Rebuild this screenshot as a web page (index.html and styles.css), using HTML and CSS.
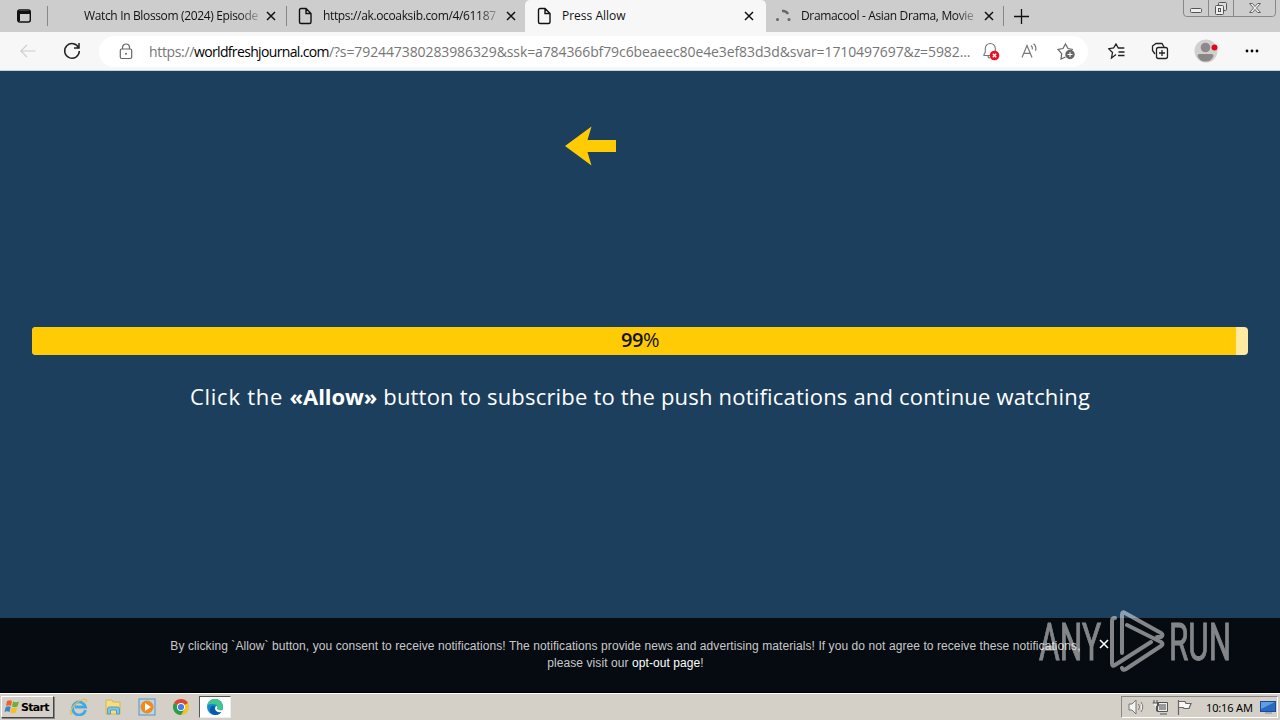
FILE: index.html
```html
<!DOCTYPE html>
<html lang="en">
<head>
  <meta charset="UTF-8" />
  <meta name="viewport" content="width=device-width, initial-scale=1.0"/>
  <title>Press Allow</title>
  <link rel="stylesheet" href="styles.css">
</head>
<body>

  <div class="tabstrip">
    <div class="tab-actions">
      <svg width="16" height="16" viewBox="0 0 16 16"><rect x="1.7" y="2" width="12.6" height="12" rx="2" fill="none" stroke="#111" stroke-width="1.4"/><path d="M2 3h12v3H2zM2 6h2v7H2z" fill="#111"/></svg>
    </div>
    <div class="tab tab-first">
      <span class="tab-icon"></span>
      <span class="tab-title title-watch">Watch In Blossom (2024) Episode</span>
      <svg class="close" width="10" height="10" viewBox="0 0 10 10"><path d="M1 1l8 8M9 1l-8 8"/></svg>
    </div>
    <div class="tab">
      <svg class="tab-icon" width="16" height="18" viewBox="0 0 16 18"><path class="page-icon" d="M2.500 3q0-1.500 1.500-1.500h5l5 5V15q0 1.500-1.500 1.500H4q-1.500 0-1.500-1.500zM9 1.500v5h5"/></svg>
      <span class="tab-title title-link">https://ak.ocoaksib.com/4/61187</span>
      <svg class="close" width="10" height="10" viewBox="0 0 10 10"><path d="M1 1l8 8M9 1l-8 8"/></svg>
    </div>
    <div class="tab active">
      <svg class="tab-icon" width="16" height="18" viewBox="0 0 16 18"><path class="page-icon" d="M2.500 3q0-1.500 1.500-1.500h5l5 5V15q0 1.500-1.500 1.500H4q-1.500 0-1.500-1.500zM9 1.500v5h5"/></svg>
      <span class="tab-title">Press Allow</span>
      <svg class="close" width="10" height="10" viewBox="0 0 10 10"><path d="M1 1l8 8M9 1l-8 8"/></svg>
    </div>
    <div class="tab tab-last">
      <svg class="tab-icon" width="16" height="18" viewBox="0 0 16 18"><path d="M7 4q4-.5 6 3" fill="none" stroke="#666" stroke-width="2.500"/><circle cx="2.500" cy="12.500" r="1.500" fill="#666"/><circle cx="14" cy="12.500" r="1.500" fill="#666"/></svg>
      <span class="tab-title title-drama">Dramacool - Asian Drama, Movie</span>
      <svg class="close" width="10" height="10" viewBox="0 0 10 10"><path d="M1 1l8 8M9 1l-8 8"/></svg>
    </div>
    <svg class="new-tab" width="15" height="15" viewBox="0 0 15 15"><path d="M7.500 0v15M0 7.500h15" stroke="#111" stroke-width="1.300"/></svg>
    <svg class="window-controls" width="93" height="17" viewBox="0 0 93 17">
      <path d="M.5 0v13q0 3.500 3 3.500h86q3 0 3-3.500V0M25.500 0v16M50.500 0v16" fill="none" stroke="#888"/>
      <rect x="7.500" y="8.500" width="11" height="4" rx="1" fill="#eee" stroke="#555"/>
      <rect x="35.500" y="2.500" width="8" height="8" rx="1" fill="#ddd" stroke="#555"/><rect x="32.500" y="5.500" width="8" height="9" rx="1" fill="#eee" stroke="#555"/><rect x="35.500" y="8.500" width="2" height="3" fill="none" stroke="#555"/>
      <path d="M66.500 3.500h3l2.500 3 2.500-3h3l-4 4.500 4 4.500h-3l-2.500-3-2.500 3h-3l4-4.500z" fill="#eee" stroke="#666"/>
    </svg>
  </div>

  <div class="toolbar">
    <svg class="back" width="16" height="14" viewBox="0 0 16 14"><path d="M15.500 7H1M7 .8L.8 7 7 13.200" fill="none" stroke="#ccc" stroke-width="1.200"/></svg>
    <svg class="reload" width="18" height="18" viewBox="0 0 18 18"><path d="M15.700 6A7.300 7.300 0 1 0 16.300 9M16 1v5h-5" fill="none" stroke="#222" stroke-width="1.500"/></svg>
    <div class="address">
      <svg class="lock" width="14" height="17" viewBox="0 0 14 17"><path d="M3.500 6V4.500a3.500 3.500 0 0 1 7 0V6" fill="none" stroke="#666" stroke-width="1.200"/><rect x="1.300" y="6" width="11.400" height="9.500" rx="1.500" fill="none" stroke="#666" stroke-width="1.200"/><circle cx="7" cy="10.700" r="1" fill="#666"/></svg>
      <div class="url"><span class="scheme">https://</span><span class="host">worldfreshjournal.com</span><span class="path">/?s=792447380283986329&amp;ssk=a784366bf79c6beaeec80e4e3ef83d3d&amp;svar=1710497697&amp;z=5982...</span></div>
      <svg class="bell" width="18" height="19" viewBox="0 0 18 19"><path d="M1.500 13.500L3.300 10V6.500a5 5 0 0 1 10 0V10M1.500 13.500H9M6 14q0 2 2 2" fill="none" stroke="#777" stroke-width="1.100"/><circle cx="12.500" cy="13.500" r="4.800" fill="#e81123"/><path d="M10.800 11.800l3.400 3.400m0-3.400l-3.400 3.400" stroke="#fff" stroke-width="1.300"/></svg>
      <svg class="read" width="18" height="16" viewBox="0 0 18 16"><path d="M1 14.500L6 2.500l5 12M2.700 10.300h6.600M10 2.500q2 1.500 1.300 4M12.500.7q3.300 2.800 2 7" fill="none" stroke="#777" stroke-width="1.200"/></svg>
      <svg class="favorite" width="19" height="18" viewBox="0 0 19 18"><path d="M8.500 15L4 17l.7-5.300L1 7.500l5-1L8.500 2 11 6.500l5 1" fill="none" stroke="#666" stroke-width="1.200"/><circle cx="13" cy="12.500" r="4.700" fill="#666"/><path d="M13 10v5M10.500 12.500h5" stroke="#fff"/></svg>
    </div>
    <svg class="star-list" width="18" height="17" viewBox="0 0 18 17"><path d="M8 11.500L3.500 15l1-5.500-3.800-3.800 5-.8L8 1l2.300 4h6M10.500 9h6M10 12.500h6.500" fill="none" stroke="#222" stroke-width="1.300"/></svg>
    <svg class="collections" width="18" height="18" viewBox="0 0 18 18"><path d="M4 12L1.500 8.500V4L5 1.500h6L13 5" fill="none" stroke="#222" stroke-width="1.300"/><rect x="5.500" y="5.500" width="11" height="11" rx="2" fill="#f7f7f7" stroke="#222" stroke-width="1.300"/><path d="M11 8v6M8 11h6" stroke="#222" stroke-width="1.300"/></svg>
    <svg class="profile" width="24" height="24" viewBox="0 0 24 24"><circle cx="12" cy="12" r="11.500" fill="#d2d0ce"/><circle cx="11.500" cy="8.500" r="4.800" fill="#8d898d"/><path d="M3.500 17q0-2 2-2h12q2 0 2 2-2 5.500-8 5.500t-8-5.500z" fill="#8a8886"/><circle cx="20.500" cy="8.500" r="3" fill="#e00b1c"/></svg>
    <svg class="more" width="14" height="4" viewBox="0 0 14 4"><circle cx="2" cy="2" r="1.400"/><circle cx="7" cy="2" r="1.400"/><circle cx="12" cy="2" r="1.400"/></svg>
  </div>

  <div class="page">
    <svg class="arrow" width="52" height="40" viewBox="0 0 52 40"><path d="M0 20L26.500 .5l-4 13.500H51v12H22.500l4 13.500z" fill="#ffcb05"/></svg>
    <div class="progress">
      <div class="progress-fill"></div>
      <div class="progress-label"><strong>99</strong>%</div>
    </div>
    <p class="message"><span class="lead">Click the </span><strong>«Allow»</strong> button to subscribe to the push notifications and continue watching</p>
    <div class="consent">
      <p>By clicking `Allow` button, you consent to receive notifications! The notifications provide news and advertising materials! If you do not agree to receive these notifications,<br>please visit our <a>opt-out page</a>!</p>
      <svg class="consent-close" width="10" height="10" viewBox="0 0 10 10"><path d="M1 1l8 8M9 1l-8 8" stroke="#fff" stroke-width="1.600"/></svg>
    </div>
    <svg class="watermark" width="200" height="68" viewBox="0 0 200 68">
      <text x="1" y="50" textLength="62" lengthAdjust="spacingAndGlyphs">ANY</text>
      <path d="M77 8q-3 0-3 3v42q0 4 3 2l36-23M84 43V5q0-4 3-2l36 20q3 2 0 4l-4 0M89 15l34 17q3 2 0 4L88 59q-3 2-4-1" fill="none" stroke="#fff" stroke-width="4" stroke-linecap="round" stroke-linejoin="round"/>
      <text x="131" y="50" textLength="62" lengthAdjust="spacingAndGlyphs">RUN</text>
    </svg>
  </div>

  <div class="taskbar">
    <div class="start">
      <svg width="16" height="16" viewBox="0 0 16 16"><path d="M3 2q3-1.500 5 0L7 7Q5 5.500 2 7z" fill="#ee6229"/><path d="M9 2.500q3 1.500 6 0l-1.500 5q-3 1.300-5.500 0z" fill="#72ad38"/><path d="M1.700 8q3-1.500 5 0l-1.200 5Q3 11.500.5 13z" fill="#3e82cd"/><path d="M7.700 8.500q3 1.500 5.500 0l-1.500 5q-3 1.500-5.500 0z" fill="#f7be25"/></svg>
      Start
    </div>
    <div class="quick-launch">
      <svg width="18" height="18" viewBox="0 0 18 18"><path d="M15.500 12A6.500 6.500 0 1 1 15.500 9H5M5 9h10.500" fill="none" stroke="#41a9e5" stroke-width="2.800"/><path d="M2 15Q-1 18 1 12 5 4 13 1.500q5-1 3 3" fill="none" stroke="#e8bd43" stroke-width="1.300"/></svg>
      <svg width="18" height="18" viewBox="0 0 18 18"><path d="M2 2h6l1 2h7v12H2z" fill="#f6dc82" stroke="#d4b557"/><path d="M3.500 16v-5q0-2 2-2h8q2 0 2 2v5h-3v-4h-6v4z" fill="#7bc5e8" stroke="#579ebd"/></svg>
      <svg width="18" height="18" viewBox="0 0 18 18"><rect x="1" y="1" width="16" height="16" fill="#b9d7eb" stroke="#5d91bd"/><circle cx="9" cy="9" r="6.500" fill="#f08a1c"/><path d="M7 5l6 4-6 4z" fill="#fff"/></svg>
      <svg width="18" height="18" viewBox="0 0 18 18"><circle cx="9" cy="9" r="8" fill="#efc329"/><path d="M9 9L2.070 5A8 8 0 0 1 15.930 5z" fill="#df4537"/><path d="M9 9L2.070 5A8 8 0 0 0 9 17l3.500-6z" fill="#2b9c50"/><circle cx="9" cy="9" r="4" fill="#fff"/><circle cx="9" cy="9" r="3.100" fill="#437fe4"/></svg>
      <div class="task-active"><svg width="18" height="18" viewBox="0 0 18 18"><circle cx="9" cy="9" r="8" fill="#168bd3"/><path d="M1.500 7C3-1 15-1 17 8q0 5-6 4 2-6-4-6-4 0-5.500 1z" fill="#44c58c"/><path d="M9 8q-3 5 7 5-2 4-7 4-6-1-5-6 1-4 5-3z" fill="#075bab"/><path d="M10 8q2 0 1 3 2 2 5 1v2q-7 1-7-4z" fill="#fff"/></svg></div>
    </div>
    <div class="tray">
      <svg width="17" height="16" viewBox="0 0 17 16"><path d="M1 5h3l4-4v14l-4-4H1zM10.500 5q2 3 0 6M13 3q3.500 5 0 10" fill="#f3f3ef" stroke="#777"/></svg>
      <svg width="17" height="16" viewBox="0 0 17 16"><path d="M5.500 3.500h10v9h-10zM8 15h7M2 1v3M5 1v3M.5 4h6v3h-2v5h2" fill="#eee" stroke="#555"/><path d="M7 5h7v6H7z" fill="#999"/></svg>
      <svg width="17" height="16" viewBox="0 0 17 16"><path d="M2.500 1v15M3 2.500h6l1 2h5l-2 5H8l-1-1H3" fill="#f7f7f7" stroke="#666" stroke-width="1.200"/></svg>
      <span class="clock">10:16 AM</span>
      <svg class="desktop" width="16" height="13" viewBox="0 0 16 13"><rect x=".5" y=".5" width="15" height="10" fill="#286ac2" stroke="#1b4c9b"/><path d="M1 1h14L1 8z" fill="#5f9ee2"/><path d="M5 12h7" stroke="#6c8dad"/></svg>
    </div>
  </div>

</body>
</html>
```

FILE: styles.css
```css
* {
  box-sizing: border-box;
}

body {
  margin: 0;
  width: 1280px;
  height: 720px;
  overflow: hidden;
  display: flex;
  flex-direction: column;
  font-family: 'Open Sans', sans-serif;
}

svg {
  display: block;
  flex-shrink: 0;
}

.tabstrip {
  height: 32px;
  flex-shrink: 0;
  background: #cdcdcd;
  display: flex;
  align-items: center;
}

.tab-actions {
  width: 48px;
  height: 20px;
  padding: 2px 16px;
  border-right: 1px solid #888;
}

.tab {
  width: 238px;
  height: 32px;
  padding: 0 9px 0 10px;
  display: flex;
  align-items: center;
  font-size: 12px;
  line-height: 18px;
  color: #111;
}

/* separators do not reach the full tab height */
.tab-first,
.tab-last {
  background: linear-gradient(#888, #888) right 6px / 1px 20px no-repeat;
}

.tab.tab-first {
  width: 239px;
  padding-right: 11px;
}

.tab.active {
  width: 241px;
  background: #f7f7f7;
  border-radius: 5px 5px 0 0;
  padding-left: 11px;
  padding-right: 12px;
}

.tab.tab-last {
  padding-right: 10px;
  padding-left: 9px;
}

.tab-icon {
  width: 16px;
  margin-right: 10px;
}

.page-icon {
  fill: none;
  stroke: #111;
  stroke-width: 1.4;
}

.tab-title {
  white-space: nowrap;
  width: 177px;
  margin-right: auto;
}

.title-watch,
.title-link,
.title-drama {
  letter-spacing: -0.35px;
  -webkit-mask-image: linear-gradient(to right, #000 155px, transparent 180px);
  mask-image: linear-gradient(to right, #000 155px, transparent 180px);
}

.close path {
  stroke: #111;
  stroke-width: 1.5;
}

.new-tab {
  margin-left: 10px;
}

.window-controls {
  margin-left: auto;
  margin-right: 4px;
  align-self: flex-start;
}

.toolbar {
  height: 39px;
  flex-shrink: 0;
  padding: 0 21px 0 20px;
  background: #f7f7f7;
  border-bottom: 1px solid #c7d2da;
  display: flex;
  align-items: center;
}

.reload {
  margin-left: 27px;
}

.address {
  width: 989px;
  height: 31px;
  margin-left: 18px;
  padding: 0 12px 0 20px;
  border-radius: 16px;
  background: #fff;
  display: flex;
  align-items: center;
}

.url {
  width: 824px;
  margin-left: 16px;
  display: flex;
  white-space: nowrap;
  color: #767676;
  font-size: 14px;
}

.scheme {
  letter-spacing: -0.35px;
}

.host {
  color: #000;
  letter-spacing: -0.65px;
}

.path {
  letter-spacing: -0.1px;
}

.bell {
  margin-left: 9px;
}

.read {
  margin-left: 21px;
}

.favorite {
  margin-left: 18px;
}

.star-list {
  margin-left: 20px;
}

.collections {
  margin-left: 25px;
}

.profile {
  margin-left: 25px;
}

.more {
  margin-left: auto;
}

.page {
  height: 621px;
  flex-shrink: 0;
  position: relative;
  display: flex;
  flex-direction: column;
  background: #1d3f5e;
}

.arrow {
  margin: 55px 0 0 565px;
}

.progress {
  position: relative;
  height: 28px;
  margin: 161px 32px 0;
  border-radius: 4px;
  overflow: hidden;
  background: #ffeaa0;
}

.progress-fill {
  width: 99%;
  height: 100%;
  background: #ffcb05;
}

.progress-label {
  position: absolute;
  inset: 0;
  text-align: center;
  font-size: 20px;
  line-height: 26px;
  letter-spacing: -0.4px;
  color: #111;
}

.progress-label strong {
  font-weight: 600;
}

.message {
  margin: 25px 0 0;
  height: 32px;
  line-height: 32px;
  text-align: center;
  white-space: nowrap;
  font-size: 22px;
  letter-spacing: 0.19px;
  color: #fff;
}

.message .lead {
  letter-spacing: 0.75px;
}

.message strong {
  letter-spacing: -0.05px;
}

.consent {
  height: 74px;
  margin-top: auto;
  padding-left: 170px;
  display: flex;
  background: #060b11;
  color: #c9c9c9;
  font-family: 'Liberation Sans', sans-serif;
  font-size: 12px;
  line-height: 17px;
}

.consent p {
  width: 911px;
  margin: 20px 0 0;
  text-align: center;
  white-space: nowrap;
  letter-spacing: 0.08px;
}

.consent a {
  color: #fff;
}

.consent-close {
  margin: 21px 0 0 18px;
}

/* translucent logo over the page */
.watermark {
  position: absolute;
  left: 1038px;
  top: 539px;
  overflow: visible;
  opacity: 0.5;
}

.watermark text {
  fill: #fff;
  stroke: #fff;
  stroke-width: 1px;
  font-family: Roboto, sans-serif;
  font-size: 52px;
}

.taskbar {
  height: 28px;
  flex-shrink: 0;
  padding: 2px 2px 1px 1px;
  background: #d4d0c8;
  border-top: 1px solid #000;
  box-shadow: inset 0 1px #fff;
  display: flex;
  align-items: center;
}

.start {
  width: 53px;
  height: 22px;
  padding-left: 2px;
  display: flex;
  align-items: center;
  border: 1px solid #fff;
  border-right-color: #444;
  border-bottom-color: #444;
  box-shadow: 1px 1px #888;
  font: bold 11px 'DejaVu Sans', sans-serif;
  letter-spacing: -0.7px;
}

.start svg {
  margin-right: 1px;
}

.quick-launch {
  margin-left: 16px;
  display: flex;
  align-items: center;
  gap: 16px;
}

.task-active {
  width: 32px;
  height: 22px;
  margin-left: -7px;
  padding: 1px 6px;
  background: #fff;
  border: 1px solid #555;
  border-right-color: #eee;
  border-bottom-color: #eee;
}

.tray {
  width: 157px;
  height: 22px;
  margin-left: auto;
  padding: 0 2px 0 6px;
  display: flex;
  align-items: center;
  gap: 7px;
  border: 1px solid #888;
  border-right-color: #fff;
  border-bottom-color: #fff;
}

.clock {
  width: 48px;
  margin-left: 6px;
  white-space: nowrap;
  font: 11px 'Noto Sans', sans-serif;
  letter-spacing: -0.15px;
}
```
